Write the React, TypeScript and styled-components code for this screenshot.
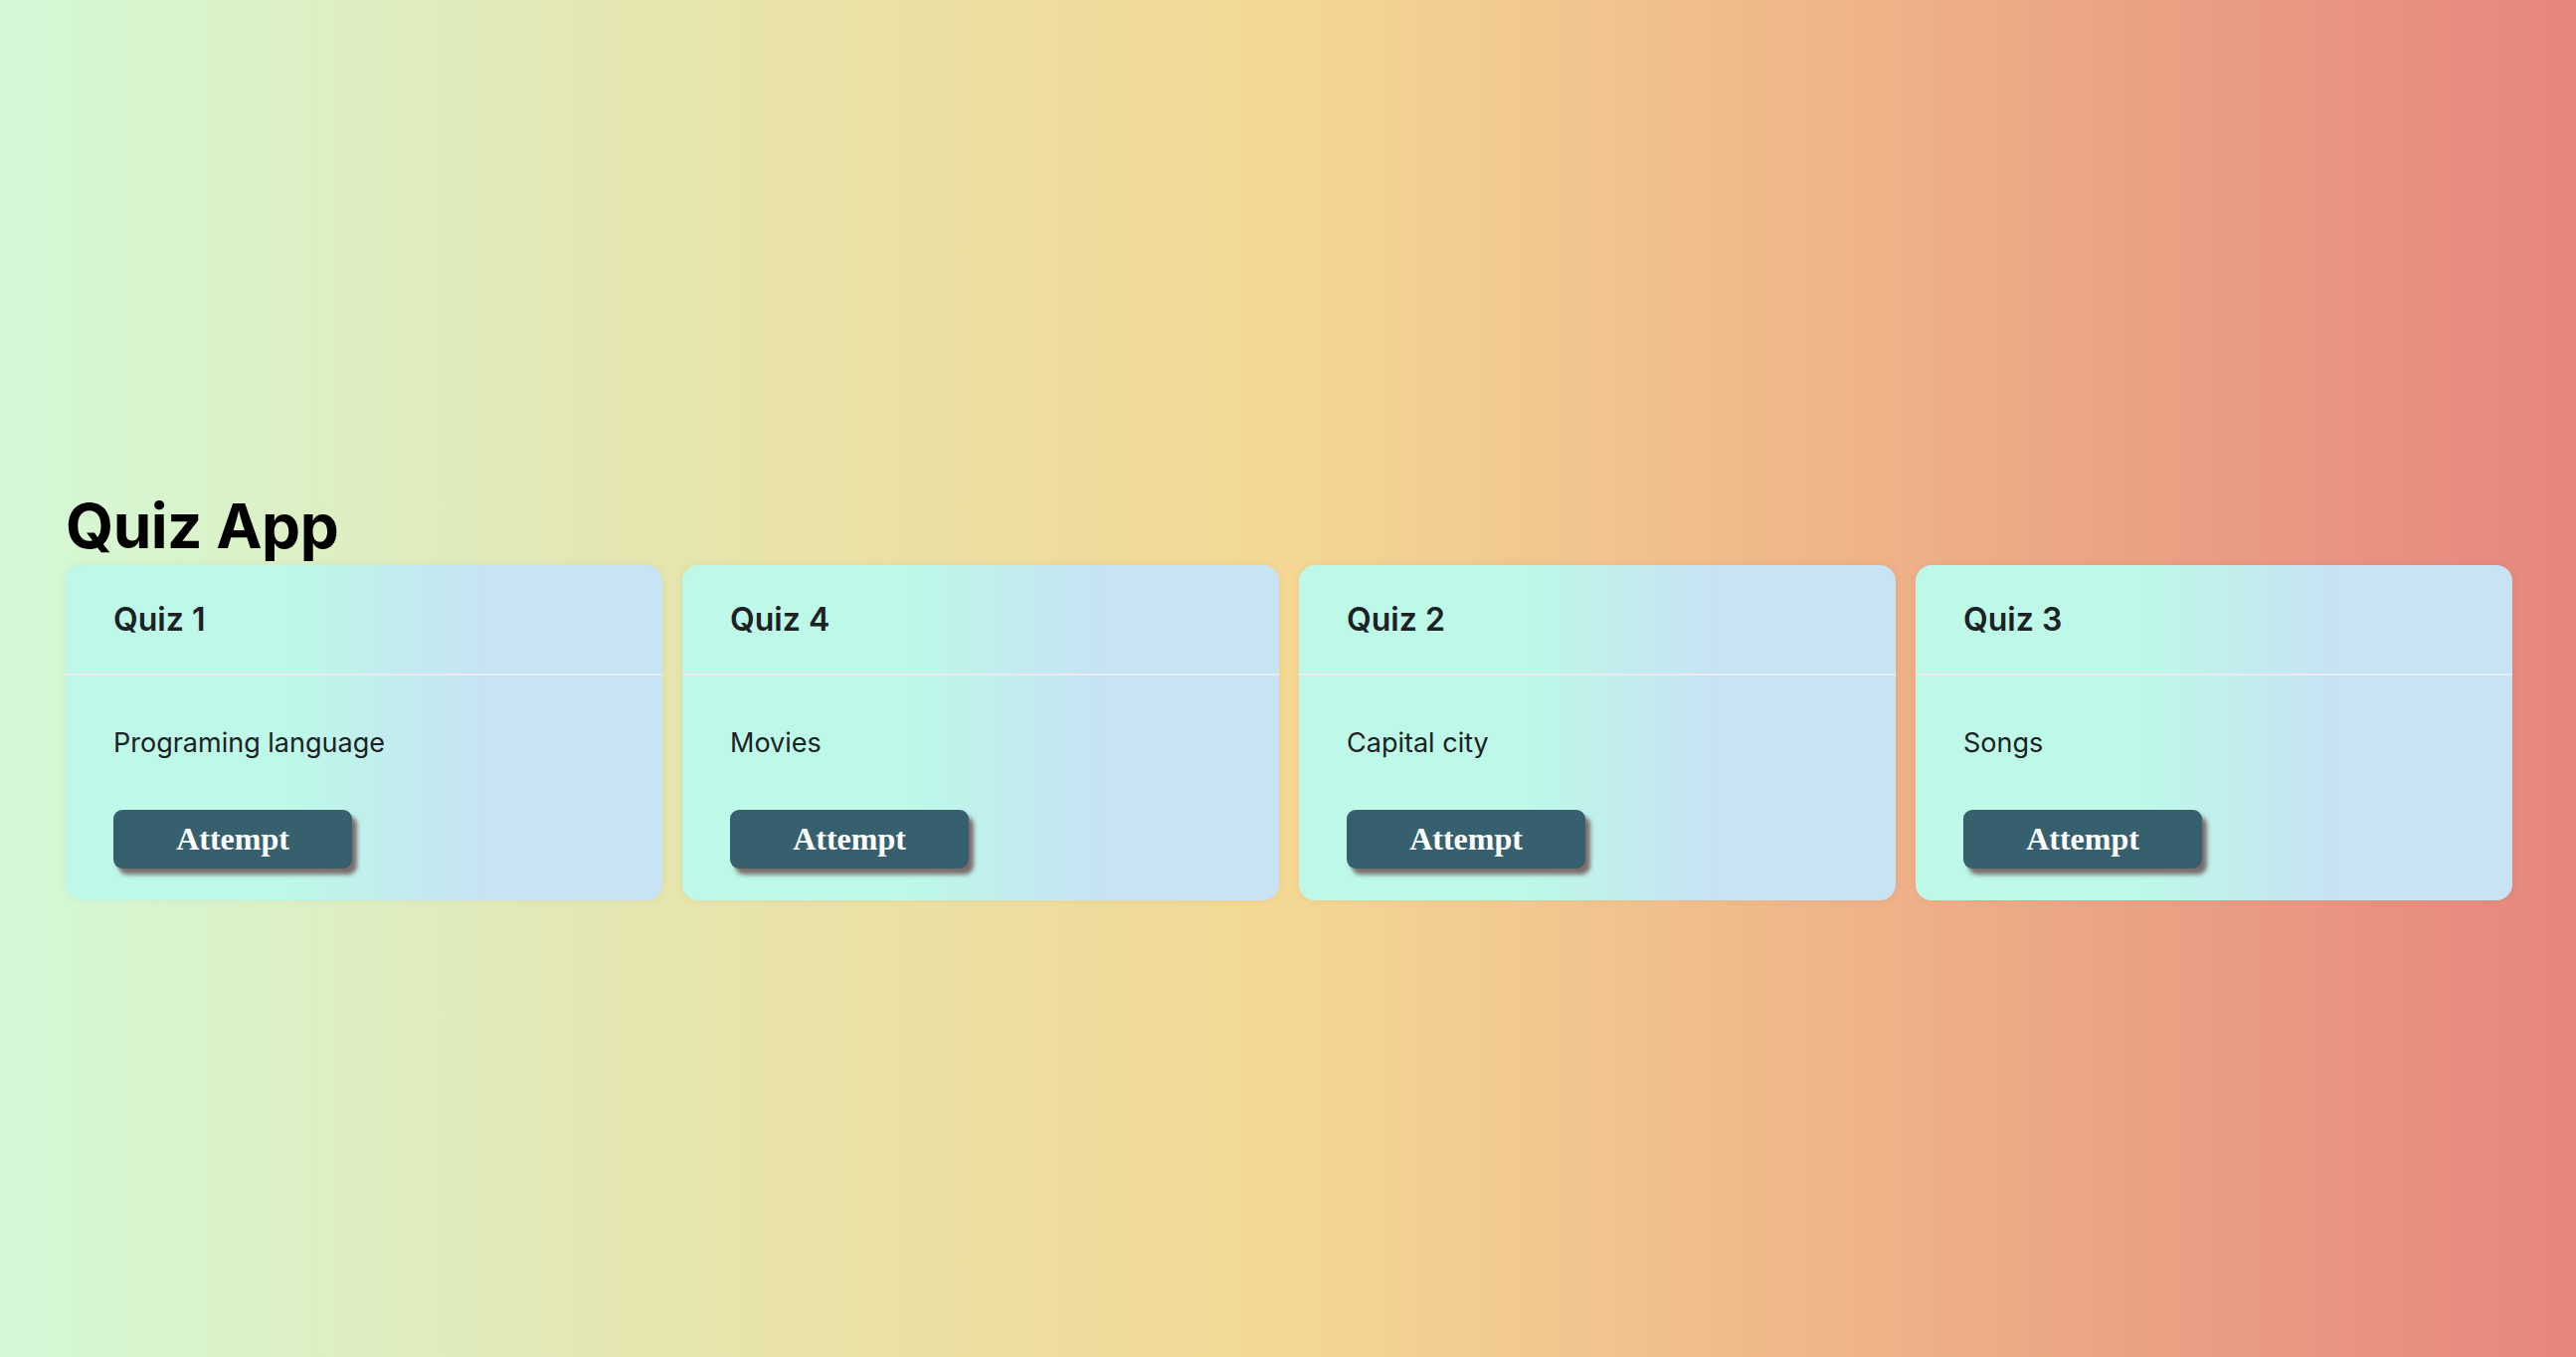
import React from "react";
import styled, { createGlobalStyle } from "styled-components";

const GlobalStyle = createGlobalStyle`
  html, body {
    margin: 0;
    padding: 0;
  }
  body {
    font-family: Inter, "Noto Sans", "Liberation Sans", sans-serif;
    color: #212529;
  }
  * { box-sizing: border-box; }
`;

const Page = styled.main`
  min-height: 100vh;
  padding: 32px 64px 0 66px;
  display: flex;
  flex-direction: column;
  justify-content: center;
  background: linear-gradient(90deg, #d4f9d8 0%, #e6e6b0 25%, #f4d894 50%, #efb489 72%, #e6867e 100%);
`;

const Title = styled.h1`
  margin: 0;
  font-size: 62px;
  line-height: 1.24;
  font-weight: 700;
  color: #000;
  letter-spacing: -0.5px;
`;

const Grid = styled.div`
  display: grid;
  grid-template-columns: repeat(4, 1fr);
  gap: 20px;
`;

const Card = styled.section`
  display: flex;
  flex-direction: column;
  border-radius: 16px;
  background: linear-gradient(90deg, #bdf8e8 38%, #c7e3f4 70%);
  box-shadow: 0 0 10px rgba(0, 0, 0, 0.05);
  overflow: hidden;
`;

const Header = styled.div`
  height: 111px;
  display: flex;
  align-items: center;
  padding: 0 48px;
  border-bottom: 2px solid #e8ecef;
  font-size: 32px;
  font-weight: 600;
  color: #1c2124;
`;

const Body = styled.div`
  padding: 48px 48px 32px;
`;

const Description = styled.p`
  margin: 0 0 46px;
  font-size: 27px;
  line-height: 1.5;
  font-weight: 400;
  color: #1c2124;
`;

const AttemptButton = styled.button`
  width: 240px;
  height: 59px;
  border: none;
  border-radius: 9px;
  background: #37606f;
  color: #fff;
  font-family: "Liberation Serif", "DejaVu Serif", serif;
  font-weight: 700;
  font-size: 32px;
  box-shadow: 5px 6px 4px rgba(110, 85, 85, 0.85);
  cursor: pointer;
`;

const quizzes = [
  { title: "Quiz 1", desc: "Programing language" },
  { title: "Quiz 4", desc: "Movies" },
  { title: "Quiz 2", desc: "Capital city" },
  { title: "Quiz 3", desc: "Songs" },
];

export default function App() {
  return (
    <>
      <GlobalStyle />
      <Page>
        <Title>Quiz App</Title>
        <Grid>
          {quizzes.map((q) => (
            <Card key={q.title}>
              <Header>{q.title}</Header>
              <Body>
                <Description>{q.desc}</Description>
                <AttemptButton>Attempt</AttemptButton>
              </Body>
            </Card>
          ))}
        </Grid>
      </Page>
    </>
  );
}
